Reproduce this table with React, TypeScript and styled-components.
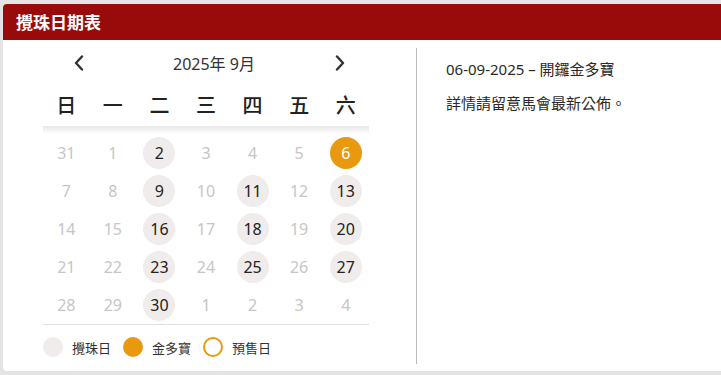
import React from "react";
import styled, { createGlobalStyle } from "styled-components";

const Global = createGlobalStyle`
  html, body { margin: 0; padding: 0; background: #e4e4e4; }
  body { font-family: "Noto Sans", "Noto Sans CJK TC", sans-serif; }
`;

const Card = styled.div`
  margin: 4px 0 0 3px;
  height: 367px;
  background: #fff;
  border-radius: 4px 0 0 4px;
  overflow: hidden;
  display: flex;
  flex-direction: column;
`;

const Header = styled.div`
  height: 36px;
  background: #990b0b;
  color: #fff;
  font-family: "Noto Sans CJK TC", sans-serif;
  font-weight: 700;
  font-size: 17px;
  line-height: 36px;
  padding-left: 13px;
`;

const Body = styled.div`
  display: flex;
  flex: 1;
`;

const CalCol = styled.div`
  width: 326px;
  margin-left: 40px;
  display: flex;
  flex-direction: column;
`;

const Nav = styled.div`
  height: 30px;
  margin-top: 8px;
  display: flex;
  align-items: center;
  color: #333;
`;

const Arrow = styled.button<{ $ml: number }>`
  border: 0;
  background: none;
  padding: 0;
  margin-left: ${(p) => p.$ml}px;
  width: 12px;
  height: 16px;
  display: flex;
  align-items: center;
  justify-content: center;
  cursor: pointer;
`;

const Title = styled.div`
  margin-left: 88px;
  font-family: "Noto Sans", "Noto Sans CJK TC", sans-serif;
  font-size: 16px;
  color: #333;
  width: 84px;
  white-space: nowrap;
`;

const Grid = styled.div`
  display: grid;
  grid-template-columns: repeat(7, 1fr);
`;

const WeekRow = styled(Grid)`
  height: 44px;
  align-items: center;
  margin-top: 4px;
`;

const WeekDay = styled.div`
  text-align: center;
  font-family: "Noto Sans CJK TC", sans-serif;
  font-size: 20px;
  font-weight: 500;
  color: #222;
`;

const Shade = styled.div`
  height: 8px;
  background: linear-gradient(#e6e6e6, #ffffff);
`;

const DayRow = styled(Grid)`
  height: 38px;
  align-items: center;
`;

const Day = styled.div<{ $kind: "muted" | "draw" | "gold" | "plain" }>`
  justify-self: center;
  width: 32px;
  height: 32px;
  border-radius: 50%;
  display: flex;
  align-items: center;
  justify-content: center;
  font-family: "Noto Sans", sans-serif;
  font-size: 16px;
  background: ${(p) =>
    p.$kind === "draw" ? "#f1ecec" : p.$kind === "gold" ? "#e8990f" : "transparent"};
  color: ${(p) =>
    p.$kind === "muted" ? "#c6c6c6" : p.$kind === "gold" ? "#fff" : "#222"};
`;

const Divider = styled.div`
  height: 1px;
  background: #dedede;
`;

const Legend = styled.div`
  display: flex;
  align-items: center;
  height: 44px;
`;

const Dot = styled.span<{ $kind: "draw" | "gold" | "pre" }>`
  box-sizing: border-box;
  width: 20px;
  height: 20px;
  border-radius: 50%;
  background: ${(p) => (p.$kind === "draw" ? "#f1ecec" : p.$kind === "gold" ? "#e8990f" : "#fff")};
  border: ${(p) => (p.$kind === "pre" ? "2px solid #e8990f" : "none")};
  margin-right: 9px;
`;

const LegendText = styled.span`
  font-family: "Noto Sans CJK TC", sans-serif;
  font-size: 13px;
  color: #333;
  margin-right: 12px;
`;

const VLine = styled.div`
  width: 1px;
  background: #bdbdbd;
  margin: 8px 0 7px 47px;
`;

const Info = styled.div`
  margin-left: 29px;
  padding-top: 18px;
  font-family: "Noto Sans", "Noto Sans CJK TC", sans-serif;
  font-size: 15px;
  color: #2a2a2a;
  line-height: 22px;
`;

const InfoLine = styled.div<{ $mt?: number }>`
  margin-top: ${(p) => p.$mt ?? 0}px;
`;

const Chevron = ({ dir }: { dir: "l" | "r" }) => (
  <svg width="10" height="16" viewBox="0 0 10 16">
    <path
      d={dir === "l" ? "M8 1.5 L2 8 L8 14.5" : "M2 1.5 L8 8 L2 14.5"}
      fill="none"
      stroke="#333"
      strokeWidth="2.4"
      strokeLinecap="round"
      strokeLinejoin="round"
    />
  </svg>
);

type Kind = "muted" | "draw" | "gold" | "plain";
const rows: [string, Kind][][] = [
  [["31", "muted"], ["1", "muted"], ["2", "draw"], ["3", "muted"], ["4", "muted"], ["5", "muted"], ["6", "gold"]],
  [["7", "muted"], ["8", "muted"], ["9", "draw"], ["10", "muted"], ["11", "draw"], ["12", "muted"], ["13", "draw"]],
  [["14", "muted"], ["15", "muted"], ["16", "draw"], ["17", "muted"], ["18", "draw"], ["19", "muted"], ["20", "draw"]],
  [["21", "muted"], ["22", "muted"], ["23", "draw"], ["24", "muted"], ["25", "draw"], ["26", "muted"], ["27", "draw"]],
  [["28", "muted"], ["29", "muted"], ["30", "draw"], ["1", "muted"], ["2", "muted"], ["3", "muted"], ["4", "muted"]],
];

export default function App() {
  return (
    <>
      <Global />
      <Card>
        <Header>攪珠日期表</Header>
        <Body>
          <CalCol>
            <Nav>
              <Arrow $ml={30}>
                <Chevron dir="l" />
              </Arrow>
              <Title>2025年 9月</Title>
              <Arrow $ml={77}>
                <Chevron dir="r" />
              </Arrow>
            </Nav>
            <WeekRow>
              {["日", "一", "二", "三", "四", "五", "六"].map((d) => (
                <WeekDay key={d}>{d}</WeekDay>
              ))}
            </WeekRow>
            <Shade />
            {rows.map((r, i) => (
              <DayRow key={i}>
                {r.map(([n, k], j) => (
                  <Day key={j} $kind={k}>
                    {n}
                  </Day>
                ))}
              </DayRow>
            ))}
            <Divider />
            <Legend>
              <Dot $kind="draw" />
              <LegendText>攪珠日</LegendText>
              <Dot $kind="gold" />
              <LegendText>金多寶</LegendText>
              <Dot $kind="pre" />
              <LegendText>預售日</LegendText>
            </Legend>
          </CalCol>
          <VLine />
          <Info>
            <InfoLine>06-09-2025 – 開鑼金多寶</InfoLine>
            <InfoLine $mt={12}>詳情請留意馬會最新公佈。</InfoLine>
          </Info>
        </Body>
      </Card>
    </>
  );
}
